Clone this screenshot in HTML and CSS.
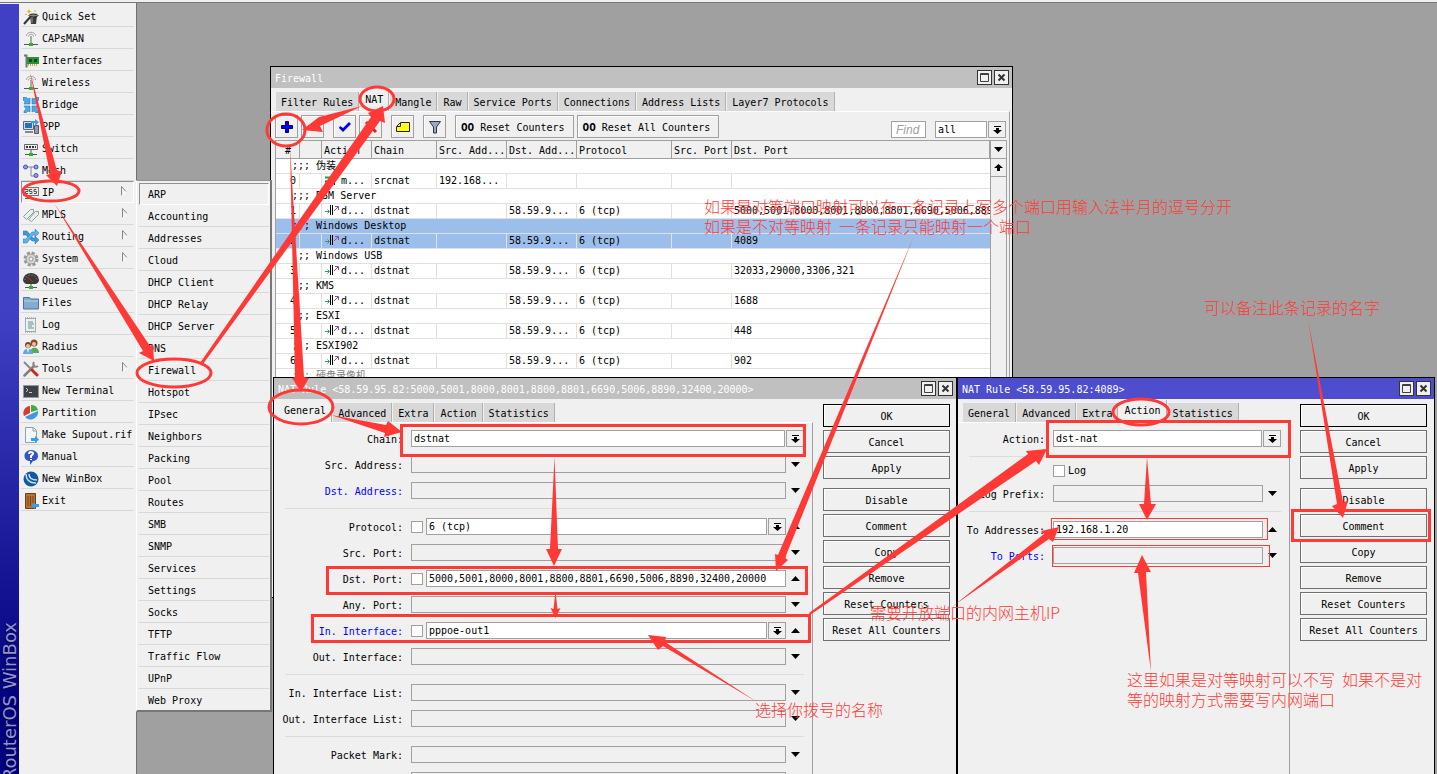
FILE: index.html
```html
<!DOCTYPE html>
<html lang="zh-CN">
<head>
    <meta charset="UTF-8">
    <meta name="viewport" content="width=device-width, initial-scale=1.0">
    <title>RouterOS WinBox</title>
    <link rel="stylesheet" href="styles.css">
</head>
<body>
    <!-- shared icons -->
    <svg class="defs" aria-hidden="true">
        <symbol id="i-antenna" viewBox="0 0 16 16">
            <path d="M3.500 5c0-5 9-5 9 0M5.500 5.500c0-3 5-3 5 0" fill="none" stroke="#a4a4a4"/>
            <path d="M8 5v8" stroke="#888" stroke-width="2"/><path d="M8 5v8" stroke="#ccc"/>
            <path d="M1 13.500h14" stroke="#556"/><rect x="6" y="12" width="4" height="3" fill="#2bb32b"/>
        </symbol>
        <symbol id="i-dst" viewBox="0 0 14 12">
            <path d="M0 7.500h4M2.500 5.500l2 2-2 2" fill="none" stroke="#2a9d6a"/>
            <path d="M5.500 1v10M7.500 1v10" stroke="#000"/>
            <path d="M9 7l4-4M10 2.500h3.500V6" fill="none" stroke="#8a4aa8"/>
        </symbol>
        <symbol id="i-drop" viewBox="0 0 9 9">
            <path d="M1 1h7v1H1zM3 3h3v2h3L4.500 9 0 5h3z"/>
        </symbol>
        <symbol id="i-down" viewBox="0 0 9 5"><path d="M0 0h9L4.500 5z"/></symbol>
        <symbol id="i-up" viewBox="0 0 9 5"><path d="M0 5h9L4.500 0z"/></symbol>
        <symbol id="i-max" viewBox="0 0 9 9"><path d="M.5.5h8v8h-8zM0 1.500h9" fill="none" stroke="#443c44"/></symbol>
        <symbol id="i-close" viewBox="0 0 9 9"><path d="M1.500 1.500l6 6M7.500 1.500l-6 6" stroke="#333" stroke-width="2"/></symbol>
        <symbol id="i-more" viewBox="0 0 6 10"><path d="M.5 9.500V.5L5 5.500" fill="none" stroke="#888"/><path d="M1 9.500L5 5.500" stroke="#fff"/></symbol>
    </svg>

    <header class="topbar"></header>
    <div class="app">
        <aside class="sidebar">
            <div class="brand"><span>RouterOS WinBox</span></div>
            <nav class="menu">
                <a href="#"><svg viewBox="0 0 16 16"><path d="M1 15L9 6" stroke="#333" stroke-width="2"/><path d="M7 7h7l-1 8H8z" fill="#3c3c3c"/><ellipse cx="10.500" cy="6.500" rx="4.500" ry="1.500" fill="#888" stroke="#222"/><path d="M9 8v6" stroke="#999"/><path d="M6 0l1 2 2 0-2 1-1 2-1-2-2 0 2-1zM12 1l1 1-1 1-1-1zM2 5h2v1H2z" fill="#e6b422"/></svg>Quick Set</a>
                <a href="#"><svg><use href="#i-antenna"/></svg>CAPsMAN</a>
                <a href="#"><svg viewBox="0 0 16 16"><path d="M1 2.500h2.500v12" fill="none" stroke="#777" stroke-width="2"/><path d="M4 4h12v7H4z" fill="#2f8f3a"/><path d="M6 6h3v3H6zM11 6h3v3h-3z" fill="#17491e"/><path d="M5 12h10" stroke="#c8b040" stroke-width="2" stroke-dasharray="1 1"/></svg>Interfaces</a>
                <a href="#"><svg><use href="#i-antenna"/></svg>Wireless</a>
                <a href="#"><svg viewBox="0 0 16 16"><path d="M0 0h3l2 2 2-1v6H1l1-2-2-2zM16 0h-3l-2 2-2-1v6h6l-1-2 2-2zM1 16v-2l2-2-2-3h6v6l-2-1-2 2zM15 16v-2l-2-2 2-3H9v6l2-1 2 2z" fill="#4aaae6" stroke="#1f6fae" stroke-width=".5"/></svg>Bridge</a>
                <a href="#"><svg viewBox="0 0 16 16"><path d="M.5 2.500h10v8H.500z" fill="#d5d8dc" stroke="#667"/><path d="M2 4h7v5H2z" fill="#2473b8"/><path d="M2 13h8" stroke="#888" stroke-width="2"/><path d="M11.500 6.500h4v8h-4z" fill="#99a" stroke="#556"/><path d="M8 2h4V0l4 3-4 4V4H8z" fill="#35a0e4"/></svg>PPP</a>
                <a href="#"><svg viewBox="0 0 16 16"><path d="M1.500 3.500h13v5h-13z" fill="#eee" stroke="#666"/><path d="M3 6h10" stroke="#333" stroke-width="2" stroke-dasharray="2 1"/><path d="M8 9v4M2 13.500h12" stroke="#556"/><path d="M6 12h4v3H6z" fill="#2bb32b"/></svg>Switch</a>
                <a href="#"><svg viewBox="0 0 16 16"><path d="M4 4h8M8 4v9h5" fill="none" stroke="#888"/><g fill="#8ea2e8" stroke="#3a4fb5"><circle cx="2.500" cy="4" r="2"/><circle cx="13" cy="4" r="2"/><circle cx="13" cy="12.500" r="2"/></g></svg>Mesh</a>
                <a href="#" class="on"><svg viewBox="0 0 16 16"><rect x=".5" y="2.500" width="15" height="8" fill="#eee" stroke="#777"/><path d="M2 4.500h3v2H2.500v2H5M9 4.500H6.500v2H9v2H6.500M13.500 4.500H11v2h2.500v2H11" fill="none" stroke="#555"/><path d="M8 11v2M2 13.500h12" stroke="#556"/></svg>IP<svg class="more"><use href="#i-more"/></svg></a>
                <a href="#"><svg viewBox="0 0 16 16"><path d="M.500 9.500l7-7 3 0 0 3-7 7zM5.500 12.500l7-8 3 0 0 3-7 7z" fill="#e8f0f0" stroke="#8a9c9c"/></svg>MPLS<svg class="more"><use href="#i-more"/></svg></a>
                <a href="#"><svg viewBox="0 0 16 16"><path d="M0 2h4l6 7h2V7l4 4-4 4v-3H9L3 6H0z" fill="#3b9bdc" stroke="#2672ae" stroke-width=".5"/><path d="M0 10h3l6-7h3V0l4 4-4 4V6h-2l-6 8H0z" fill="#62b4e8" stroke="#2672ae" stroke-width=".5"/></svg>Routing<svg class="more"><use href="#i-more"/></svg></a>
                <a href="#"><svg viewBox="0 0 16 16"><circle cx="8" cy="8" r="6" fill="none" stroke="#999" stroke-width="3" stroke-dasharray="3 1.700"/><circle cx="8" cy="8" r="5" fill="#d4d4d4" stroke="#999"/><circle cx="8" cy="8" r="2" fill="#f5f5f5" stroke="#999"/></svg>System<svg class="more"><use href="#i-more"/></svg></a>
                <a href="#"><svg viewBox="0 0 16 16"><path d="M0 7a8 7 0 0 1 16 0c0 2-2 4-4 4H4c-2 0-4-2-4-4z" fill="#3a3a3a"/><path d="M2 7a6 5 0 0 1 12 0" fill="none" stroke="#999" stroke-dasharray="1 2"/><path d="M4 4l6 5" stroke="#d22"/><path d="M8 11v3M2 14.500h12" stroke="#556"/><path d="M6 13h4v3H6z" fill="#2bb32b"/></svg>Queues</a>
                <a href="#"><svg viewBox="0 0 16 16"><path d="M.5 14V2.500h6l1 1.500h8v10z" fill="#84acd0" stroke="#4b7397"/><path d="M1 6h14" stroke="#b8d1e5"/></svg>Files</a>
                <a href="#"><svg viewBox="0 0 16 16"><path d="M2.500 1.500h10v13h-10z" fill="#e8f1f2" stroke="#9fb3b5"/><path d="M2 1h11M2 15h11" stroke="#889" stroke-dasharray="1 1"/><path d="M5 5h5M5 7h6M5 9h4M5 11h6" stroke="#6d8d90"/></svg>Log</a>
                <a href="#"><svg viewBox="0 0 16 16"><circle cx="11" cy="4" r="3.500" fill="#8a4b26"/><circle cx="11" cy="5" r="2" fill="#f0c195"/><path d="M7 14c0-7 9-7 9 0z" fill="#4fae55"/><circle cx="5" cy="6" r="3" fill="#6b4a2c"/><circle cx="5" cy="7" r="2" fill="#f0c195"/><path d="M0 15c0-7 10-7 10 0z" fill="#62a8e0"/><path d="M4 10h2l-1 4z" fill="#fff"/></svg>Radius</a>
                <a href="#"><svg viewBox="0 0 16 16"><path d="M1.500 14.500L11 5" stroke="#808080" stroke-width="2.500" stroke-linecap="round"/><path d="M11 1c-2 3 1 6 4 4" fill="none" stroke="#888" stroke-width="2"/><path d="M1 1l8 8" stroke="#888" stroke-width="2"/><path d="M9 9l5 5" stroke="#c92a2a" stroke-width="3" stroke-linecap="round"/></svg>Tools<svg class="more"><use href="#i-more"/></svg></a>
                <a href="#"><svg viewBox="0 0 16 16"><rect x=".5" y="2.500" width="15" height="12" fill="#3d4148" stroke="#999"/><path d="M3 5l2 2-2 2M6 9.500h3" fill="none" stroke="#ccc"/></svg>New Terminal</a>
                <a href="#"><svg viewBox="0 0 16 16"><path d="M7 8V1a7 7 0 0 0-6 10z" fill="#d93a33"/><path d="M8 7V0a7 7 0 0 1 7 5z" fill="#3fae3f"/><path d="M8 9l7-3a7.500 7.500 0 0 1-13 6z" fill="#3b9bdc"/></svg>Partition</a>
                <a href="#"><svg viewBox="0 0 16 16"><path d="M2.500.5h8l3 3v12h-11z" fill="#f2f8f9" stroke="#8da3a6"/><path d="M10 1v3h3" fill="none" stroke="#8da3a6"/><path d="M8 11h4V9l4 3.500-4 3.500v-2H8z" fill="#35a0e4"/></svg>Make Supout.rif</a>
                <a href="#"><svg viewBox="0 0 16 16"><path d="M8 1c9 0 9 11 2 11l-3 4v-4C-1 12 0 1 8 1z" fill="#2f55c8"/><path d="M6 5c0-3 5-2 4 0L8 7v2M8 10v1" fill="none" stroke="#fff" stroke-width="2"/></svg>Manual</a>
                <a href="#"><svg viewBox="0 0 16 16"><circle cx="8" cy="8" r="7.500" fill="#17579c"/><path d="M3 3c0 7 4 9 10 9M6 3c0 4 3 6 8 6" fill="none" stroke="#bfe0f8" stroke-width="1.500"/></svg>New WinBox</a>
                <a href="#"><svg viewBox="0 0 16 16"><path d="M2.500.5h10v15h-10z" fill="#b5713a" stroke="#6f3d17"/><path d="M5 3v10M7.500 3v10M10 3v7" stroke="#7d4519"/><path d="M16 11h-4V9l-4 3.500 4 3.500v-2h4z" fill="#35a0e4"/></svg>Exit</a>
            </nav>
        </aside>

        <main class="desktop"></main>
    </div>

    <nav class="submenu">
        <a href="#" class="on">ARP</a>
        <a href="#">Accounting</a>
        <a href="#">Addresses</a>
        <a href="#">Cloud</a>
        <a href="#">DHCP Client</a>
        <a href="#">DHCP Relay</a>
        <a href="#">DHCP Server</a>
        <a href="#">DNS</a>
        <a href="#">Firewall</a>
        <a href="#">Hotspot</a>
        <a href="#">IPsec</a>
        <a href="#">Neighbors</a>
        <a href="#">Packing</a>
        <a href="#">Pool</a>
        <a href="#">Routes</a>
        <a href="#">SMB</a>
        <a href="#">SNMP</a>
        <a href="#">Services</a>
        <a href="#">Settings</a>
        <a href="#">Socks</a>
        <a href="#">TFTP</a>
        <a href="#">Traffic Flow</a>
        <a href="#">UPnP</a>
        <a href="#">Web Proxy</a>
    </nav>

    <!-- Firewall list -->
    <section class="win win-firewall">
        <div class="title"><h2>Firewall</h2>
            <button aria-label="Maximize"><svg><use href="#i-max"/></svg></button>
            <button aria-label="Close"><svg><use href="#i-close"/></svg></button>
        </div>
        <div class="tabs">
            <button>Filter Rules</button>
            <button class="on">NAT</button>
            <button>Mangle</button>
            <button>Raw</button>
            <button>Service Ports</button>
            <button>Connections</button>
            <button>Address Lists</button>
            <button>Layer7 Protocols</button>
        </div>
        <div class="pane list">
            <div class="toolbar">
                <div class="tools">
                    <button class="tool" aria-label="Add"><svg viewBox="0 0 14 14"><path d="M5.500 1.500h3v4h4v3h-4v4h-3v-4h-4v-3h4z" fill="#0000f0" stroke="#000060"/></svg></button>
                    <button class="tool" aria-label="Remove"><svg viewBox="0 0 14 14"><path d="M2 5h10v4H2z" fill="#d22"/></svg></button>
                </div>
                <div class="tools">
                    <button class="tool" aria-label="Enable"><svg viewBox="0 0 14 14"><path d="M2 6l3 2 6-6 2 2-8 8-4-4z" fill="#0000e0"/></svg></button>
                    <button class="tool" aria-label="Disable"><svg viewBox="0 0 14 14"><path d="M2 2l10 10M12 2L2 12" stroke="#d22" stroke-width="3"/></svg></button>
                </div>
                <button class="tool" aria-label="Comment"><svg viewBox="0 0 14 14"><path d="M4.500 2.500h9v9H.5v-5z" fill="#ff0" stroke="#222"/><path d="M4.500 3v3.500H1" fill="none" stroke="#222"/></svg></button>
                <button class="tool" aria-label="Filter"><svg viewBox="0 0 14 14"><path d="M1.500 1.500h11L8.500 7v6h-3V7z" fill="#9aa8c8" stroke="#334"/></svg></button>
                <div class="tools">
                    <button class="tool wide"><b>OO</b> Reset Counters</button>
                    <button class="tool wide"><b>OO</b> Reset All Counters</button>
                </div>
                <input class="find" placeholder="Find" aria-label="Find">
                <div class="combo">
                    <select aria-label="Chain filter"><option>all</option></select>
                    <button class="drop" aria-label="Open"><svg><use href="#i-drop"/></svg></button>
                </div>
            </div>
            <div class="grid">
                <table>
                    <colgroup><col class="c-num"><col class="c-flag"><col class="c-act"><col class="c-chain"><col class="c-addr"><col class="c-addr"><col class="c-proto"><col class="c-sport"><col></colgroup>
                    <thead>
                        <tr><th class="num">#</th><th></th><th>Action</th><th>Chain</th><th>Src. Add...</th><th>Dst. Add...</th><th>Protocol</th><th>Src. Port</th><th>Dst. Port</th></tr>
                    </thead>
                    <tbody>
                        <tr class="note"><td colspan="9">;;; 伪装</td></tr>
                        <tr><td class="num">0</td><td></td><td class="act"><svg viewBox="0 0 14 12"><path d="M0 3.500h5" stroke="#2a9d3a" stroke-width="2"/><path d="M0 7.500h5" stroke="#33c" stroke-width="2"/><path d="M7.500 1v10M9.500 1v10" stroke="#000"/></svg>m...</td><td>srcnat</td><td>192.168...</td><td></td><td></td><td></td><td></td></tr>
                        <tr class="note"><td colspan="9">;;; DSM Server</td></tr>
                        <tr><td class="num">1</td><td></td><td class="act"><svg><use href="#i-dst"/></svg>d...</td><td>dstnat</td><td></td><td>58.59.9...</td><td>6 (tcp)</td><td></td><td>5000,5001,8000,8001,8800,8801,6690,5006,8890,32400,20000</td></tr>
                        <tr class="note sel"><td colspan="9">;;; Windows Desktop</td></tr>
                        <tr class="sel"><td class="num">2</td><td></td><td class="act"><svg><use href="#i-dst"/></svg>d...</td><td>dstnat</td><td></td><td>58.59.9...</td><td>6 (tcp)</td><td></td><td>4089</td></tr>
                        <tr class="note"><td colspan="9">;;; Windows USB</td></tr>
                        <tr><td class="num">3</td><td></td><td class="act"><svg><use href="#i-dst"/></svg>d...</td><td>dstnat</td><td></td><td>58.59.9...</td><td>6 (tcp)</td><td></td><td>32033,29000,3306,321</td></tr>
                        <tr class="note"><td colspan="9">;;; KMS</td></tr>
                        <tr><td class="num">4</td><td></td><td class="act"><svg><use href="#i-dst"/></svg>d...</td><td>dstnat</td><td></td><td>58.59.9...</td><td>6 (tcp)</td><td></td><td>1688</td></tr>
                        <tr class="note"><td colspan="9">;;; ESXI</td></tr>
                        <tr><td class="num">5</td><td></td><td class="act"><svg><use href="#i-dst"/></svg>d...</td><td>dstnat</td><td></td><td>58.59.9...</td><td>6 (tcp)</td><td></td><td>448</td></tr>
                        <tr class="note"><td colspan="9">;;; ESXI902</td></tr>
                        <tr><td class="num">6</td><td></td><td class="act"><svg><use href="#i-dst"/></svg>d...</td><td>dstnat</td><td></td><td>58.59.9...</td><td>6 (tcp)</td><td></td><td>902</td></tr>
                        <tr class="note off"><td colspan="9">;;; 硬盘录像机</td></tr>
                    </tbody>
                </table>
                <div class="scroll">
                    <button aria-label="Columns"><svg><use href="#i-down"/></svg></button>
                    <button aria-label="Scroll up"><svg viewBox="0 0 9 7"><path d="M4.500 0L9 4H6v3H3V4H0z"/></svg></button>
                </div>
            </div>
        </div>
    </section>

    <!-- NAT rule, General tab -->
    <section class="win win-general">
        <div class="title"><h2>NAT Rule &lt;58.59.95.82:5000,5001,8000,8001,8800,8801,6690,5006,8890,32400,20000&gt;</h2>
            <button aria-label="Maximize"><svg><use href="#i-max"/></svg></button>
            <button aria-label="Close"><svg><use href="#i-close"/></svg></button>
        </div>
        <div class="win-body">
            <div class="left">
                <div class="tabs">
                    <button class="on">General</button>
                    <button>Advanced</button>
                    <button>Extra</button>
                    <button>Action</button>
                    <button>Statistics</button>
                </div>
                <form class="pane form">
                    <div class="row"><label for="chain">Chain:</label><select id="chain"><option>dstnat</option></select><button type="button" class="drop" aria-label="Open"><svg><use href="#i-drop"/></svg></button></div>
                    <div class="row"><label for="srca">Src. Address:</label><input id="srca" class="empty"><button type="button" class="fold" aria-label="Expand"><svg><use href="#i-down"/></svg></button></div>
                    <div class="row blue"><label for="dsta">Dst. Address:</label><input id="dsta" class="empty"><button type="button" class="fold" aria-label="Expand"><svg><use href="#i-down"/></svg></button></div>
                    <hr>
                    <div class="row"><label for="proto">Protocol:</label><input type="checkbox" aria-label="Not protocol"><select id="proto"><option>6 (tcp)</option></select><button type="button" class="drop" aria-label="Open"><svg><use href="#i-drop"/></svg></button><button type="button" class="fold" aria-label="Collapse"><svg><use href="#i-up"/></svg></button></div>
                    <div class="row"><label for="srcp">Src. Port:</label><input id="srcp" class="empty"><button type="button" class="fold" aria-label="Expand"><svg><use href="#i-down"/></svg></button></div>
                    <div class="row"><label for="dstp">Dst. Port:</label><input type="checkbox" aria-label="Not destination port"><input id="dstp" value="5000,5001,8000,8001,8800,8801,6690,5006,8890,32400,20000"><button type="button" class="fold" aria-label="Collapse"><svg><use href="#i-up"/></svg></button></div>
                    <div class="row"><label for="anyp">Any. Port:</label><input id="anyp" class="empty"><button type="button" class="fold" aria-label="Expand"><svg><use href="#i-down"/></svg></button></div>
                    <div class="row blue"><label for="inif">In. Interface:</label><input type="checkbox" aria-label="Not in interface"><select id="inif"><option>pppoe-out1</option></select><button type="button" class="drop" aria-label="Open"><svg><use href="#i-drop"/></svg></button><button type="button" class="fold" aria-label="Collapse"><svg><use href="#i-up"/></svg></button></div>
                    <div class="row"><label for="outif">Out. Interface:</label><input id="outif" class="empty"><button type="button" class="fold" aria-label="Expand"><svg><use href="#i-down"/></svg></button></div>
                    <hr>
                    <div class="row"><label for="inl">In. Interface List:</label><input id="inl" class="empty"><button type="button" class="fold" aria-label="Expand"><svg><use href="#i-down"/></svg></button></div>
                    <div class="row"><label for="outl">Out. Interface List:</label><input id="outl" class="empty"><button type="button" class="fold" aria-label="Expand"><svg><use href="#i-down"/></svg></button></div>
                    <hr>
                    <div class="row"><label for="pmark">Packet Mark:</label><input id="pmark" class="empty"><button type="button" class="fold" aria-label="Expand"><svg><use href="#i-down"/></svg></button></div>
                    <div class="row"><span class="label"></span><input aria-label="Connection Mark" class="empty"><button type="button" class="fold" aria-label="Expand"><svg><use href="#i-down"/></svg></button></div>
                </form>
            </div>
            <div class="actions">
                <button class="ok">OK</button>
                <button>Cancel</button>
                <button>Apply</button>
                <button class="next">Disable</button>
                <button>Comment</button>
                <button>Copy</button>
                <button>Remove</button>
                <button>Reset Counters</button>
                <button>Reset All Counters</button>
            </div>
        </div>
    </section>

    <!-- NAT rule, Action tab -->
    <section class="win win-action">
        <div class="title active"><h2>NAT Rule &lt;58.59.95.82:4089&gt;</h2>
            <button aria-label="Maximize"><svg><use href="#i-max"/></svg></button>
            <button aria-label="Close"><svg><use href="#i-close"/></svg></button>
        </div>
        <div class="win-body">
            <div class="left">
                <div class="tabs">
                    <button>General</button>
                    <button>Advanced</button>
                    <button>Extra</button>
                    <button class="on">Action</button>
                    <button>Statistics</button>
                </div>
                <form class="pane form narrow">
                    <div class="row"><label for="action">Action:</label><select id="action"><option>dst-nat</option></select><button type="button" class="drop" aria-label="Open"><svg><use href="#i-drop"/></svg></button></div>
                    <hr>
                    <div class="row check"><span class="label"></span><input type="checkbox" id="log"><label for="log">Log</label></div>
                    <div class="row"><label for="prefix">Log Prefix:</label><input id="prefix" class="empty"><button type="button" class="fold" aria-label="Expand"><svg><use href="#i-down"/></svg></button></div>
                    <hr>
                    <div class="row"><label for="toaddr">To Addresses:</label><input id="toaddr" value="192.168.1.20"><button type="button" class="fold" aria-label="Collapse"><svg><use href="#i-up"/></svg></button></div>
                    <div class="row blue"><label for="toport">To Ports:</label><input id="toport" class="empty"><button type="button" class="fold" aria-label="Expand"><svg><use href="#i-down"/></svg></button></div>
                </form>
            </div>
            <div class="actions">
                <button class="ok">OK</button>
                <button>Cancel</button>
                <button>Apply</button>
                <button class="next">Disable</button>
                <button>Comment</button>
                <button>Copy</button>
                <button>Remove</button>
                <button>Reset Counters</button>
                <button>Reset All Counters</button>
            </div>
        </div>
    </section>

    <!-- red marks over the windows -->
    <svg class="marks" aria-hidden="true">
        <g class="ring">
            <ellipse cx="51" cy="191" rx="28" ry="10"/>
            <ellipse cx="174" cy="373" rx="37" ry="14"/>
            <ellipse cx="377" cy="99" rx="17" ry="12"/>
            <ellipse cx="286" cy="130" rx="19" ry="16"/>
            <ellipse cx="301" cy="407" rx="32" ry="17"/>
            <ellipse cx="1141" cy="412" rx="28" ry="13"/>
        </g>
        <g class="frame">
            <rect x="401.500" y="425.500" width="403" height="30"/>
            <rect x="327.500" y="567.500" width="479" height="26"/>
            <rect x="312.500" y="615.500" width="497" height="26"/>
            <rect x="1047.500" y="421.500" width="242" height="35"/>
            <rect x="1292.500" y="510.500" width="137" height="30"/>
        </g>
        <g class="thin">
            <rect x="1051.500" y="518.500" width="216" height="21"/>
            <rect x="1052.500" y="545.500" width="217" height="21"/>
        </g>
        <g class="arrow">
            <path d="M30 72L57 171l5 0-5 15-11-11 4-1z"/>
            <path d="M54 203l96 143 3-2 1 17-15-8 4-2z"/>
            <path d="M200 363L371 117l-3-4 15-7 2 17-5-2-177 243z"/>
            <path d="M362 106l-43 11-17 13 21 2-3-6z"/>
            <path d="M290 147l14 230 5 1-8 14-9-14 3-1z"/>
            <path d="M331 415l55 10 2-4 14 11-18 5 1-4z"/>
            <path d="M554.500 457l3.500 92 4 0-8 17-8-17 4 0z"/>
            <path d="M555.500 591l2 18 3-1-5 10-5-10 3 1z"/>
            <path d="M914 236L785 558l3 2-12 11-1-17 3 1z"/>
            <path d="M809 613l219-159-2-3 21-2-8 16-3-4-226 154z"/>
            <path d="M757 702l-94-56-5 4-10-15 18 2-1 5z"/>
            <path d="M953 606l91-72-3-3 18-4-6 15-4-3z"/>
            <path d="M1147 457l4 47 5 0-9 16-8-16 5 0z"/>
            <path d="M1151 672l-13-99-4 0 8-18 9 17-5 0z"/>
            <path d="M1308 320l35 182 5-1-5 17-11-12 5-2z"/>
        </g>
    </svg>
    <p class="tip tip-ports">如果是对等端口映射可以在一条记录上写多个端口用输入法半月的逗号分开<br>如果是不对等映射&nbsp; 一条记录只能映射一个端口</p>
    <p class="tip tip-name">可以备注此条记录的名字</p>
    <p class="tip tip-host">需要开放端口的内网主机IP</p>
    <p class="tip tip-dial">选择你拨号的名称</p>
    <p class="tip tip-inner">这里如果是对等映射可以不写&nbsp; 如果不是对<br>等的映射方式需要写内网端口</p>
</body>
</html>
```
FILE: styles.css
```css
*{
    margin: 0;
    padding: 0;
    box-sizing: border-box;
}
body{
    position: relative;
    height: 100vh;
    overflow: hidden;
    display: flex;
    flex-direction: column;
    background: #a0a0a0;
    color: #000;
    font: 10px/14px "DejaVu Sans Mono", "Noto Sans CJK SC", monospace;
}
button,input,select{
    font: inherit;
    color: inherit;
    border-radius: 0;
    appearance: none;
}
a{
    color: inherit;
    text-decoration: none;
}
.defs{
    position: absolute;
    width: 0;
    height: 0;
}

.topbar{
    flex: none;
    height: 3px;
    background: #f0f0f0;
    border-bottom: 1px solid #777;
}
.app{
    flex: 1;
    display: flex;
    min-height: 0;
}
.desktop{
    flex: 1;
}

/* sidebar */
.sidebar{
    display: flex;
    background: #f0f0f0;
    border-right: 1px solid #707070;
}
.brand{
    width: 19px;
    overflow: hidden;
    display: flex;
    justify-content: center;
    align-items: flex-end;
    background: linear-gradient(#4040c4 0%, #4040c4 40%, #00007c 92%);
    border-top: 1px solid #f0f0f0;
}
.brand span{
    margin-bottom: -6px;
    writing-mode: vertical-rl;
    transform: rotate(180deg);
    font: 18px/19px "DejaVu Sans", sans-serif;
    color: #9494cc;
    text-shadow: -1px -1px 1px #000040;
    white-space: nowrap;
}
.menu{
    width: 117px;
    padding: 2px 2px 0;
}
.menu a{
    height: 22px;
    display: flex;
    align-items: center;
    gap: 3px;
    padding: 2px 0 0 2px;
    border-bottom: 1px solid #d8d8d8;
    white-space: nowrap;
}
.menu svg{
    flex: none;
    width: 16px;
    height: 16px;
}
.menu .more{
    width: 6px;
    height: 10px;
    margin: 0 6px 4px auto;
}
.menu .on{
    border: 1px solid #fff;
    border-top-color: #909090;
    border-left-color: #909090;
    padding: 1px 0 0 1px;
}
.submenu{
    position: absolute;
    left: 136px;
    top: 180px;
    width: 136px;
    padding: 2px 1px 0 2px;
    background: #f0f0f0;
    border: 1px solid #909090;
    border-left-color: #fff;
    border-right: 2px solid #777;
    border-bottom: 2px solid #777;
    z-index: 1;
}
.submenu a{
    display: block;
    height: 22px;
    padding: 5px 9px 0;
    border-bottom: 1px solid #d8d8d8;
}
.submenu a:last-child{
    height: 21px;
    border-bottom: 0;
}
.submenu .on{
    border: 1px solid #fff;
    border-top-color: #909090;
    border-left-color: #909090;
    padding: 4px 8px;
}

/* windows */
.win{
    position: absolute;
    display: flex;
    flex-direction: column;
    background: #f0f0f0;
    border: 1px solid #000;
}
.win-firewall{
    left: 270px;
    top: 66px;
    width: 743px;
    height: 532px;
}
.win-general,.win-action{
    top: 377px;
    bottom: 0;
    border-bottom: 0;
    overflow: hidden;
    z-index: 2;
}
.win-general{
    left: 273px;
    width: 684px;
}
.win-action{
    left: 957px;
    width: 478px;
}
.title{
    flex: none;
    height: 21px;
    display: flex;
    align-items: center;
    gap: 2px;
    padding: 0 3px 0 4px;
    background: #c0c0c0;
    color: #fff;
}
.title.active{
    background: #4d4dcd;
}
.title h2{
    flex: 1;
    font-size: 10px;
    font-weight: normal;
    padding-top: 3px;
    white-space: nowrap;
}
.title button{
    width: 15px;
    height: 15px;
    display: flex;
    align-items: center;
    justify-content: center;
    background: #f0f0f0;
    border: 1px solid #333;
}
.title svg{
    width: 9px;
    height: 9px;
}
.tabs{
    flex: none;
    height: 23px;
    display: flex;
    align-items: flex-end;
    gap: 1px;
    padding-left: 5px;
}
.tabs button{
    height: 19px;
    padding: 2px 5px 0;
    background: #d8d8d8;
    border: 0;
    border-right: 1px solid #b0b0b0;
    white-space: nowrap;
}
.tabs .on{
    height: 22px;
    padding: 0 5px 1px;
    background: #f0f0f0;
}
.pane{
    flex: 1;
    border-top: 1px solid #fff;
    border-right: 1px solid #a0a0a0;
}

/* list */
.list{
    display: flex;
    flex-direction: column;
    margin-right: 2px;
    padding: 3px 2px 0 4px;
}
.toolbar{
    display: flex;
    align-items: flex-end;
    gap: 9px;
    padding-right: 1px;
}
.tools{
    display: flex;
    gap: 3px;
}
.tool{
    width: 23px;
    height: 23px;
    display: flex;
    align-items: center;
    justify-content: center;
    background: #f0f0f0;
    border: 1px solid #a0a0a0;
    box-shadow: inset 1px 1px #fff;
    white-space: pre;
}
.tool svg{
    width: 14px;
    height: 14px;
}
.tool.wide{
    width: auto;
    padding: 2px 8px 0 5px;
}
.tool b{
    font-size: 11px;
}
.combo{
    display: flex;
    gap: 1px;
    width: 71px;
}
select,input{
    flex: 1;
    min-width: 0;
    height: 17px;
    padding: 0 2px;
    background: #fff;
    border: 1px solid #a0a0a0;
}
.find{
    flex: none;
    width: 35px;
    margin-left: auto;
    padding: 0 4px;
    font: italic 12px/15px "Liberation Sans", sans-serif;
}
.find::placeholder{
    color: #a0a0a0;
}
.drop{
    flex: none;
    width: 18px;
    height: 17px;
    display: flex;
    align-items: center;
    justify-content: center;
    background: #f0f0f0;
    border: 1px solid #a0a0a0;
}
.drop svg{
    width: 9px;
    height: 9px;
}
.grid{
    flex: 1;
    min-height: 0;
    display: flex;
    margin-top: 2px;
    border: 1px solid #a0a0a0;
    overflow: hidden;
    background: #fff;
}
table{
    flex: 1;
    width: 0;
    height: 0;
    table-layout: fixed;
    border-collapse: separate;
    border-spacing: 0;
}
.c-num{ width: 24px; }
.c-flag{ width: 22px; }
.c-act{ width: 50px; }
.c-chain{ width: 65px; }
.c-addr{ width: 70px; }
.c-proto{ width: 95px; }
.c-sport{ width: 60px; }
th,td{
    overflow: hidden;
    white-space: nowrap;
    text-align: left;
    font-weight: normal;
    border-right: 1px solid #e0e0e0;
    border-bottom: 1px solid #e0e0e0;
}
th{
    height: 18px;
    padding: 2px 0 0 2px;
    background: #f0f0f0;
    border-color: #a0a0a0;
}
td{
    height: 15px;
    padding: 0 0 0 2px;
}
td:last-child{
    border-right: 0;
}
th.num{
    padding-left: 9px;
}
td.num{
    padding: 0 3px 0 0;
    text-align: right;
}
.note td{
    padding-left: 16px;
}
.sel{
    background: #9cbeea;
}
.off{
    color: #808080;
}
.act svg{
    width: 14px;
    height: 12px;
    margin: 0 2px 0 1px;
    vertical-align: top;
}
.scroll{
    width: 16px;
    background: #f0f0f0;
    border-left: 1px solid #a0a0a0;
}
.scroll button{
    width: 15px;
    height: 18px;
    display: flex;
    align-items: center;
    justify-content: center;
    background: #f0f0f0;
    border: 0;
    border-bottom: 1px solid #a0a0a0;
}
.scroll svg{
    width: 9px;
    height: 7px;
}

/* rule forms */
.win-body{
    flex: 1;
    display: flex;
    min-height: 0;
}
.left{
    flex: 1;
    display: flex;
    flex-direction: column;
    min-height: 0;
}
.form{
    display: flex;
    flex-direction: column;
    gap: 9px;
    min-height: 0;
    padding: 7px 8px 0 0;
    overflow: hidden;
}
.row{
    flex: none;
    display: flex;
    height: 17px;
    align-items: center;
}
.row label:first-child,.row .label{
    width: 129px;
    margin-right: 8px;
    padding-top: 2px;
    text-align: right;
    white-space: nowrap;
}
.narrow .row label:first-child,.narrow .row .label{
    width: 87px;
}
.row .empty{
    background: #f0f0f0;
    border-color: #a0a0a0;
}
.blue label{
    color: #00f;
}
.row input[type=checkbox]{
    flex: none;
    width: 12px;
    height: 12px;
    margin-right: 3px;
    padding: 0;
}
.row .drop{
    margin-left: 1px;
}
.row.check{
    height: 10px;
}
.fold{
    flex: none;
    width: 18px;
    height: 17px;
    border: 0;
    background: none;
    display: flex;
    align-items: center;
    justify-content: center;
}
.fold svg{
    width: 9px;
    height: 5px;
}
hr{
    flex: none;
    border: 0;
    height: 1px;
    margin-left: 11px;
    background: #dcdcdc;
}
.actions{
    width: 143px;
    display: flex;
    flex-direction: column;
    gap: 3px;
    padding: 5px 6px 0 10px;
}
.win-action .actions{
    width: 144px;
    padding-right: 7px;
}
.actions button{
    height: 23px;
    padding-top: 2px;
    background: #f0f0f0;
    border: 1px solid #707070;
    box-shadow: inset 1px 1px #fff;
}
.actions .ok{
    border-color: #000;
}
.actions .next{
    margin-top: 6px;
}

/* red marks */
.marks{
    position: absolute;
    left: 0;
    top: 0;
    width: 100%;
    height: 100%;
    z-index: 3;
    pointer-events: none;
}
.ring,.frame,.thin{
    fill: none;
    stroke: #ff3a36;
}
.ring,.frame{
    stroke-width: 3;
}
.arrow{
    fill: #ff3a36;
}
.tip{
    position: absolute;
    z-index: 4;
    color: #ff3a36;
    font: 300 16px/20px "Noto Sans CJK SC", sans-serif;
    white-space: nowrap;
    pointer-events: none;
}
.tip-ports{
    left: 704px;
    top: 196px;
}
.tip-name{
    left: 1204px;
    top: 297px;
}
.tip-host{
    left: 870px;
    top: 602px;
}
.tip-dial{
    left: 755px;
    top: 699px;
}
.tip-inner{
    left: 1127px;
    top: 669px;
}
```
